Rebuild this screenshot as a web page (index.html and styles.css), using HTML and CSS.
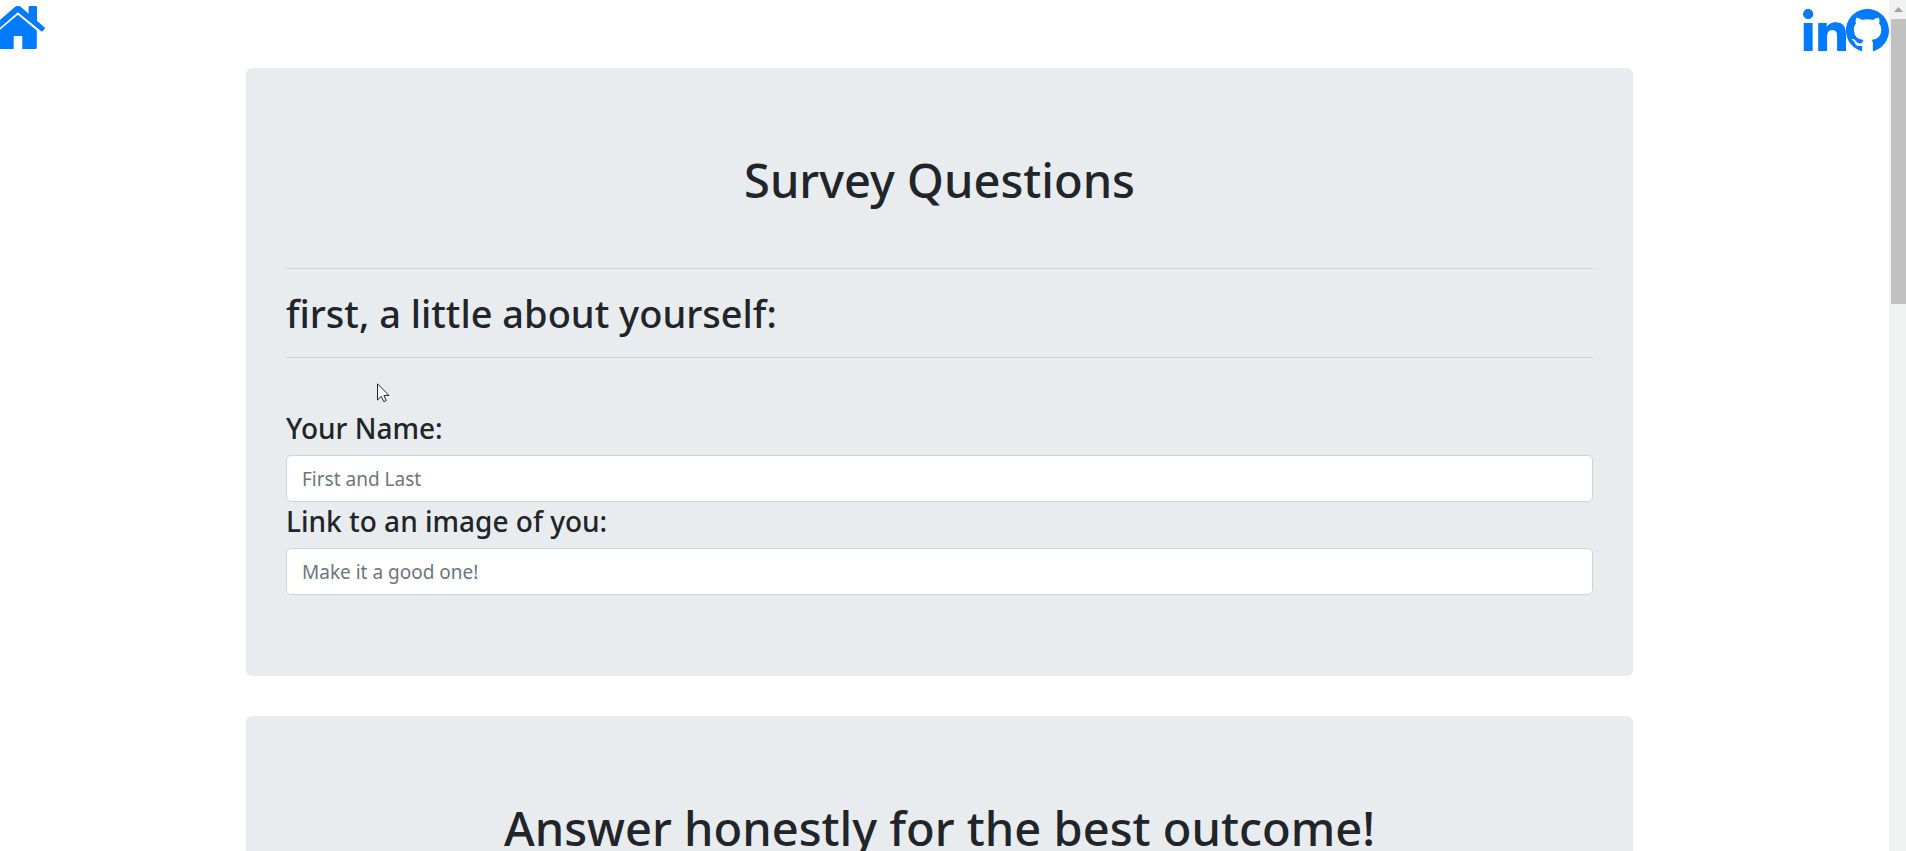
FILE: index.html
```html
<!DOCTYPE html>
<html lang="en">
<head>
<meta charset="utf-8">
<title>Survey Questions</title>
<link rel="stylesheet" href="styles.css">
</head>
<body>
<div class="page">
  <header class="topbar">
    <a class="home" href="#" aria-label="Home">
      <svg width="46" height="44" viewBox="0 6 46 44" fill="currentColor">
        <path d="M-9 28 L14.600 7.200 Q18 4.600 21.200 7.200 L28.600 13.800 V7 Q28.600 6 29.600 6 H36 Q37 6 37 7 V20.800 L44.600 27.600 Q45.200 28.200 44.700 28.900 L42.400 31.200 Q41.700 31.700 41 31.100 L17.800 12.200 L-6 33Z"/>
        <path d="M-1 30.500 L17.800 14.800 L36.800 30.500 V47.500 Q36.800 49 35.300 49 H22.300 V36 H13.700 V49 H0.500 Q-1 49 -1 47.500Z"/>
      </svg>
    </a>
    <nav class="social" aria-label="Social links">
      <a href="#" aria-label="LinkedIn">
        <svg width="43" height="42" viewBox="0 0 448 448" preserveAspectRatio="none" fill="currentColor"><path d="M100.280 448H7.400V148.900h92.880zM53.790 108.100C24.090 108.100 0 83.500 0 53.800a53.790 53.790 0 0 1 107.580 0c0 29.700-24.100 54.300-53.790 54.300zM447.900 448h-92.680V302.400c0-34.700-.7-79.200-48.290-79.200-48.290 0-55.690 37.700-55.690 76.700V448h-92.780V148.900h89.080v40.800h1.300c12.400-23.500 42.690-48.300 87.880-48.300 94 0 111.280 61.900 111.280 142.300V448z"/></svg>
      </a>
      <a href="#" aria-label="GitHub">
        <svg width="43" height="43" viewBox="0 0 16 16" fill="currentColor"><path d="M8 0C3.580 0 0 3.580 0 8c0 3.540 2.290 6.530 5.470 7.590.4.070.55-.17.55-.38 0-.19-.01-.82-.01-1.490-2.010.37-2.530-.49-2.690-.94-.09-.23-.48-.94-.82-1.130-.28-.15-.68-.52-.01-.53.63-.01 1.080.58 1.230.82.72 1.210 1.870.87 2.330.66.070-.52.28-.87.51-1.070-1.780-.2-3.640-.89-3.640-3.950 0-.87.31-1.590.82-2.150-.08-.2-.36-1.020.08-2.120 0 0 .67-.21 2.200.82.64-.18 1.320-.27 2-.27.68 0 1.360.09 2 .27 1.530-1.040 2.200-.82 2.200-.82.44 1.100.16 1.920.08 2.120.51.56.82 1.270.82 2.150 0 3.070-1.870 3.750-3.650 3.950.29.25.54.73.54 1.480 0 1.070-.01 1.930-.01 2.200 0 .21.15.46.55.38A8.013 8.013 0 0 0 16 8c0-4.420-3.580-8-8-8z"/></svg>
      </a>
    </nav>
  </header>
  <main class="content">
    <section class="card">
      <h1>Survey Questions</h1>
      <hr>
      <h2>first, a little about yourself:</h2>
      <hr>
      <form class="about">
        <label for="name">Your Name:</label>
        <input id="name" type="text" placeholder="First and Last">
        <label for="photo">Link to an image of you:</label>
        <input id="photo" type="text" placeholder="Make it a good one!">
      </form>
    </section>
    <section class="card">
      <h1>Answer honestly for the best outcome!</h1>
      <hr>
    </section>
  </main>
</div>
<div class="scrollbar" aria-hidden="true">
  <svg class="arrow" width="15" height="19" viewBox="0 0 15 19"><path d="M3 12 L7.500 7 L12 12Z" fill="#a3a3a3"/></svg>
  <div class="thumb"></div>
</div>
<svg class="pointer" width="13" height="20" viewBox="0 0 13 20" aria-hidden="true"><path d="M.5 .8 V17 L4.300 13.400 L6.800 18.600 L9.200 17.500 L6.900 12.400 H11.900Z" fill="#fff" stroke="#222" stroke-width="1"/></svg>
</body>
</html>
```
FILE: styles.css
```css
* {
  box-sizing: border-box;
}

body {
  margin: 0;
  height: 100vh;
  display: grid;
  grid-template-columns: minmax(0, 1fr) 17px;
  overflow: hidden;
  background: #fff;
  color: #212529;
  font-family: "Noto Sans", "Open Sans", sans-serif;
  font-size: 20px;
  line-height: 30px;
}

.page {
  height: 100vh;
  overflow: hidden;
}

.topbar {
  display: flex;
  justify-content: space-between;
  height: 68px;
  padding-top: 6px;
}

.topbar a {
  color: #007bff;
}

.topbar svg {
  display: block;
}

.social {
  display: flex;
  padding-top: 3px;
}

.content {
  display: flex;
  flex-direction: column;
  align-items: center;
  gap: 40px;
  padding-right: 10px;
}

.card {
  width: 100%;
  max-width: 1387px;
  padding: 80px 40px;
  border-radius: 6px;
  background: #e8ecef;
}

h1,
h2 {
  margin: 0;
  font-weight: 500;
}

h1 {
  margin-bottom: 56px;
  font-size: 47px;
  line-height: 64px;
  text-align: center;
}

h2 {
  font-size: 38px;
  line-height: 48px;
}

hr {
  height: 1px;
  margin: 20px 0;
  border: 0;
  background: #cfd3d6;
}

.about {
  display: flex;
  flex-direction: column;
  padding: 31px 0 1px;
}

.about label {
  margin-bottom: 7px;
  font-size: 28px;
  font-weight: 500;
  line-height: 39px;
}

.about input {
  width: 100%;
  height: 47px;
  padding: 0 15px;
  border: 1px solid #ced4da;
  border-radius: 5px;
  background: #fff;
  color: #495057;
  font-family: inherit;
  font-size: 19px;
}

.about input::placeholder {
  color: #6c757d;
  opacity: 1;
}

.scrollbar {
  padding-left: 2px;
  background: #f0f1f1;
}

.arrow {
  display: block;
}

.thumb {
  height: 285px;
  background: #c1c1c1;
}

.pointer {
  position: fixed;
  left: 377px;
  top: 383px;
}
```
